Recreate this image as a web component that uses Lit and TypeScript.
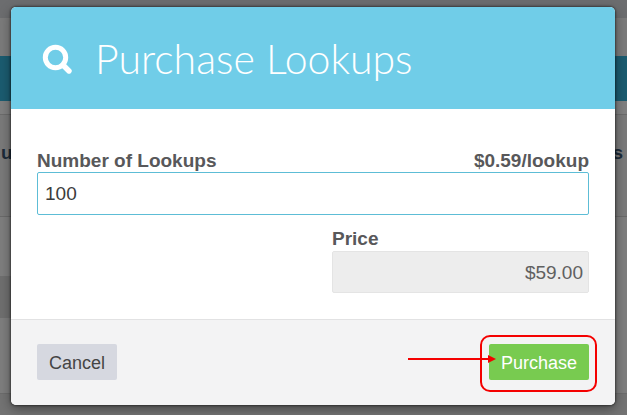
import { LitElement, html, css } from "lit";
import { customElement, state } from "lit/decorators.js";

@customElement("page-backdrop")
class PageBackdrop extends LitElement {
  static styles = css`
    :host {
      display: flex;
      flex-direction: column;
      min-height: 100%;
      background: #7c7c7c;
      font: bold 19px/24px "Liberation Sans", Arial, sans-serif;
      color: #1c2a38;
    }
    .top {
      height: 18px;
      background: #6c6d6f;
    }
    .bar {
      height: 38px;
      background: #7b7b7b;
    }
    .nav {
      height: 45px;
      background: #1b5c70;
    }
    .crumbs {
      height: 13px;
      border-bottom: 1px solid #6c6c6c;
      background: #808080;
    }
    .row {
      display: flex;
      justify-content: space-between;
      box-sizing: border-box;
      height: 102px;
      padding: 26px 4px 0 1px;
      border-bottom: 1px solid #6a6a6a;
      background: #7a7a7a;
    }
    .gap {
      height: 59px;
      background: #7e7e7e;
    }
    .band {
      height: 42px;
      background: linear-gradient(to right, #6f6f6f 50%, #7e7e7e 50%);
    }
    .rest {
      height: 75px;
      border-bottom: 1px solid #6c6c6c;
      background: #7e7e7e;
    }
    .foot {
      flex: 1;
      background: #737373;
    }
  `;

  render() {
    return html`
      <div class="top"></div>
      <div class="bar"></div>
      <div class="nav"></div>
      <div class="crumbs"></div>
      <div class="row"><span>u</span><span>s</span></div>
      <div class="gap"></div>
      <div class="band"></div>
      <div class="rest"></div>
      <div class="foot"></div>
    `;
  }
}

@customElement("purchase-dialog")
class PurchaseDialog extends LitElement {
  @state() private count = 100;
  private readonly rate = 0.59;

  static styles = css`
    :host {
      display: block;
      border-radius: 5px;
      overflow: hidden;
      background: #fff;
      color: #58585a;
      font: 19px/22px "Liberation Sans", Arial, sans-serif;
      box-shadow: 0 0 2px 1px rgba(0, 0, 0, 0.4), 0 4px 12px rgba(0, 0, 0, 0.4);
    }
    header {
      display: flex;
      align-items: center;
      gap: 22px;
      height: 102px;
      padding: 2px 30px 0;
      box-sizing: border-box;
      background: #70cde8;
      color: #fff;
    }
    .search {
      flex: none;
      width: 32px;
      height: 32px;
    }
    h1 {
      margin: 0;
      font: 300 41px/48px Lato, "Liberation Sans", sans-serif;
      white-space: nowrap;
    }
    .body {
      padding: 41px 26px 26px;
    }
    .labels {
      display: flex;
      justify-content: space-between;
      font-weight: bold;
    }
    input {
      display: block;
      box-sizing: border-box;
      width: 100%;
      height: 43px;
      padding: 0 7px;
      border: 1px solid #5dbdd6;
      border-radius: 2px;
      background: #fff;
      color: #3c3c3c;
      font: inherit;
      outline: none;
    }
    .price {
      display: grid;
      width: 257px;
      margin: 13px 0 0 auto;
      gap: 1px;
    }
    .price label {
      font-weight: bold;
    }
    .price input {
      height: 42px;
      padding: 2px 5px 0;
      border-color: #e4e4e4;
      background: #ededed;
      color: #606060;
      text-align: right;
    }
    footer {
      display: flex;
      justify-content: space-between;
      padding: 24px 26px 25px;
      border-top: 1px solid #e2e2e3;
      background: #f3f3f4;
    }
    button {
      height: 36px;
      padding: 2px 12px 0;
      border: 0;
      border-radius: 2px;
      font: 18px/34px "Liberation Sans", Arial, sans-serif;
      background: #d6d8e0;
      color: #454545;
    }
    .buy {
      background: #78cb50;
      color: #fff;
    }
    .target {
      position: relative;
    }
    .callout {
      position: absolute;
      inset: -9px -8px -12px -9px;
      border: 2px solid #f40000;
      border-radius: 10px;
      pointer-events: none;
    }
    .arrow {
      position: absolute;
      right: 92px;
      top: 10px;
      width: 90px;
      height: 10px;
      pointer-events: none;
    }
  `;

  private onCount(e: Event) {
    this.count = Number((e.target as HTMLInputElement).value) || 0;
  }

  render() {
    return html`
      <header>
        <svg class="search" viewBox="0 0 32 32" fill="none" stroke="#fff" aria-hidden="true">
          <circle cx="14.5" cy="14.5" r="10.2" stroke-width="5" />
          <path d="M22 22 28 28" stroke-width="5.4" stroke-linecap="round" />
        </svg>
        <h1>Purchase Lookups</h1>
      </header>
      <div class="body">
        <div class="labels">
          <label for="count">Number of Lookups</label>
          <span>$${this.rate}/lookup</span>
        </div>
        <input id="count" type="text" .value=${String(this.count)} @input=${this.onCount} />
        <div class="price">
          <label for="price">Price</label>
          <input id="price" type="text" readonly .value=${"$" + (this.count * this.rate).toFixed(2)} />
        </div>
      </div>
      <footer>
        <button type="button">Cancel</button>
        <div class="target">
          <button type="button" class="buy">Purchase</button>
          <div class="callout"></div>
          <svg class="arrow" viewBox="0 0 90 10" aria-hidden="true">
            <path d="M1 5H82" stroke="#f40000" stroke-width="2" />
            <path d="M81 1 89 5 81 9Z" fill="#f40000" />
          </svg>
        </div>
      </footer>
    `;
  }
}

@customElement("app-root")
class AppRoot extends LitElement {
  static styles = css`
    :host {
      display: block;
      box-sizing: border-box;
      min-height: 100vh;
      padding: 0 4px 2px 0;
      background: #fff;
    }
    .stage {
      display: grid;
      min-height: calc(100vh - 2px);
      overflow: hidden;
    }
    .stage > * {
      grid-area: 1 / 1;
    }
    purchase-dialog {
      align-self: start;
      margin: 7px 12px 10px 11px;
    }
  `;

  render() {
    return html`
      <div class="stage">
        <page-backdrop></page-backdrop>
        <purchase-dialog role="dialog" aria-label="Purchase Lookups"></purchase-dialog>
      </div>
    `;
  }
}
